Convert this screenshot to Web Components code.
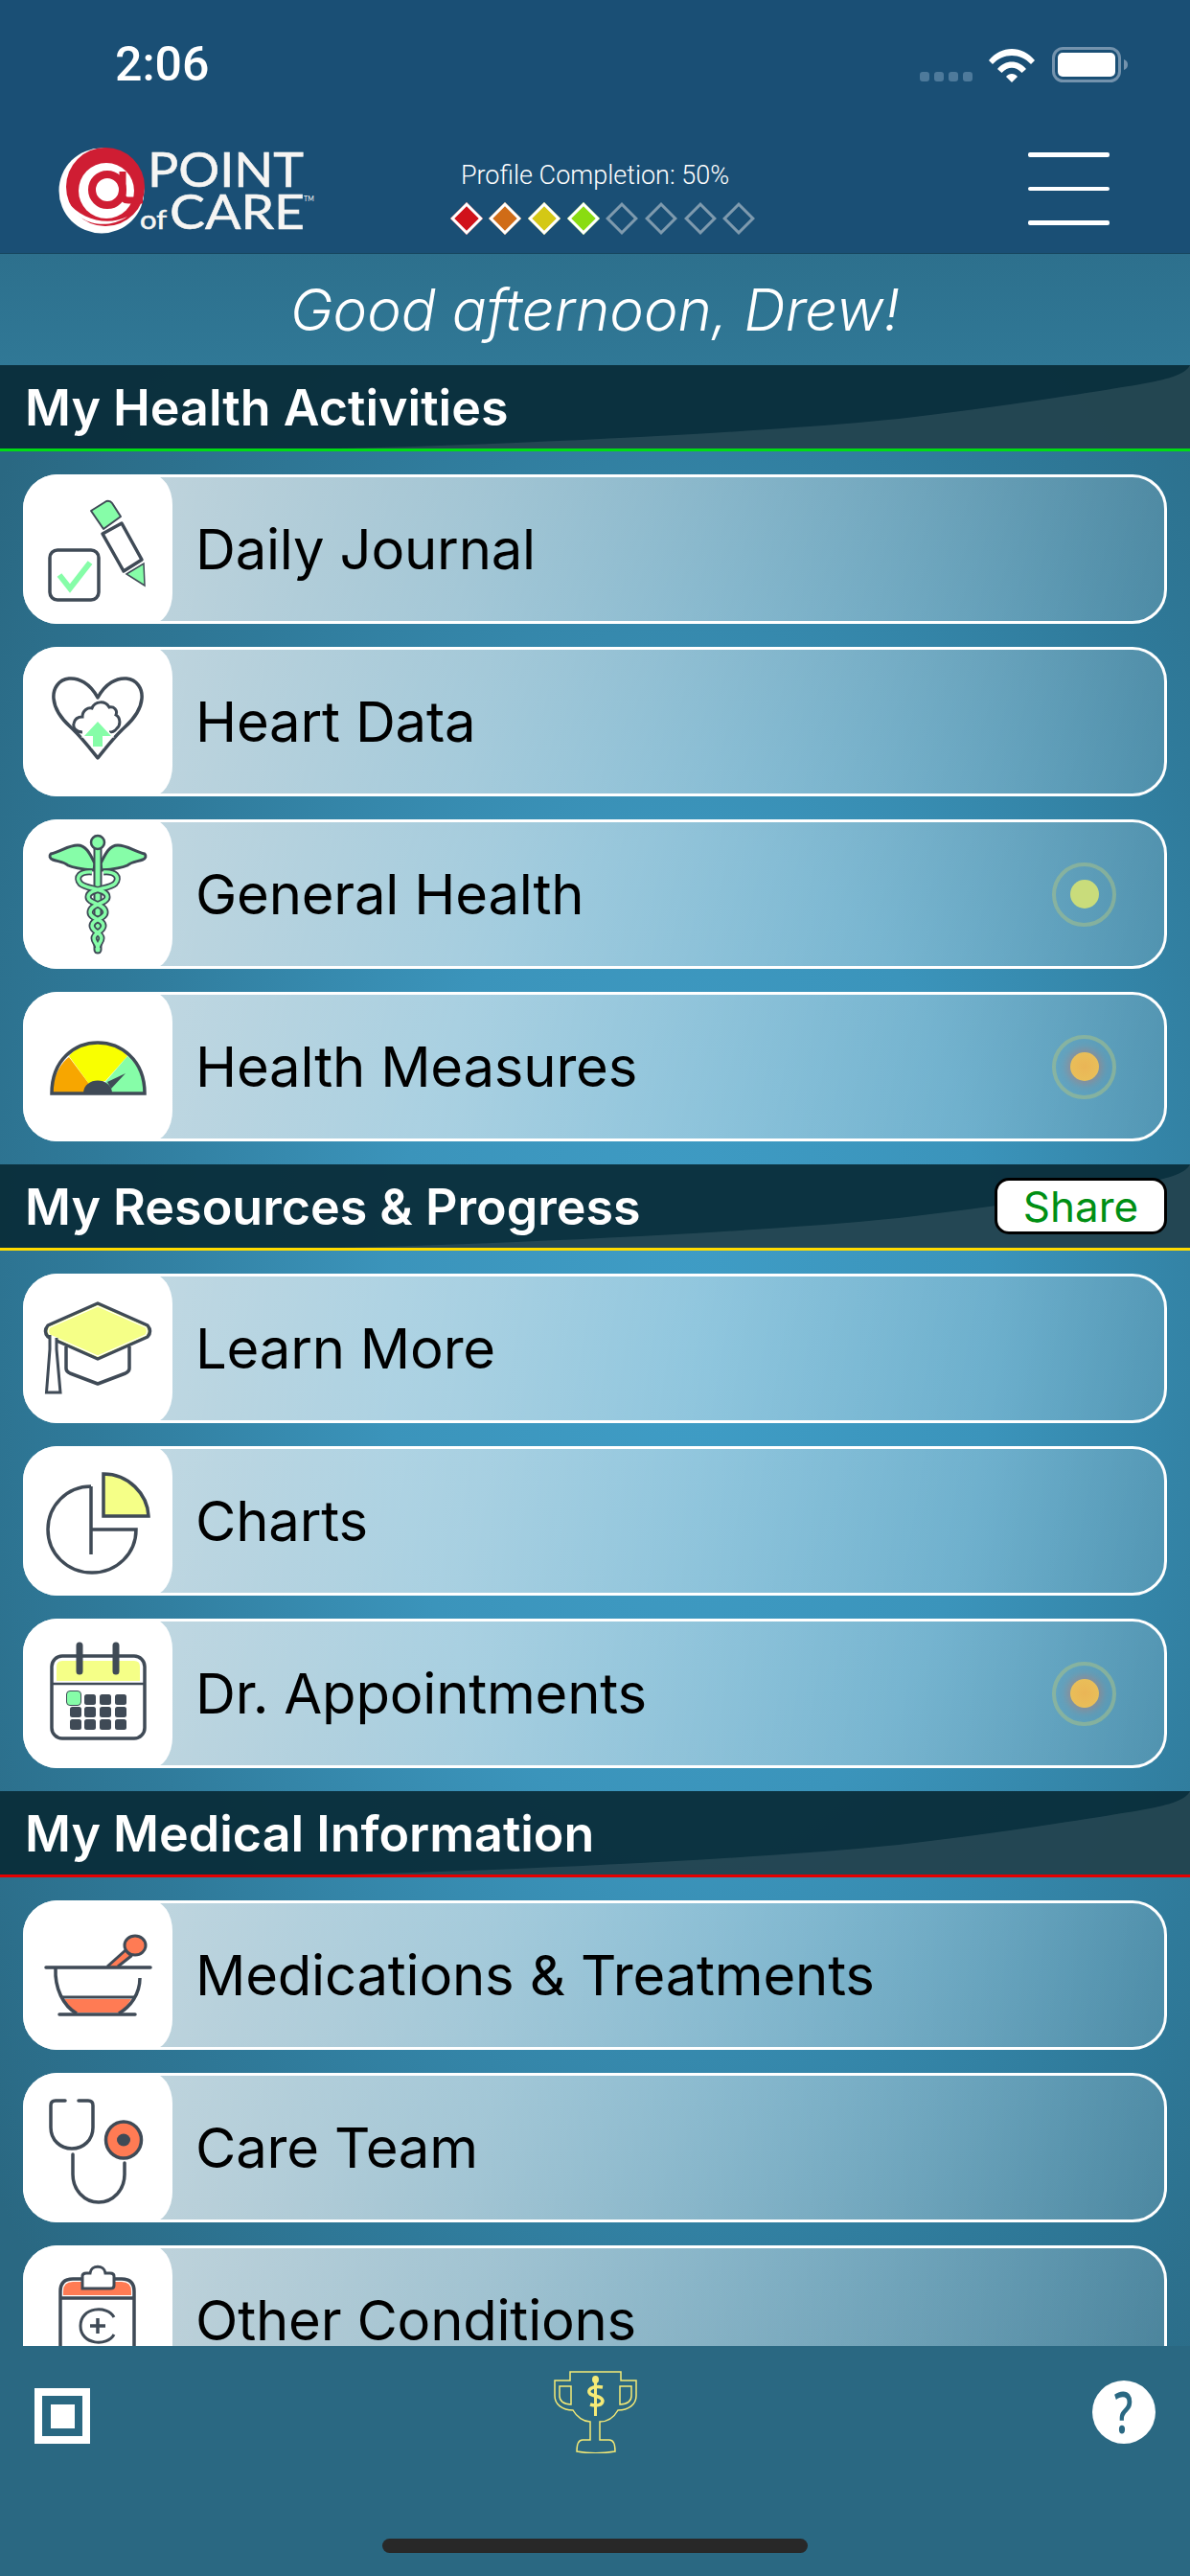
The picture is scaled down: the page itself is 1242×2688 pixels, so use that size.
<!DOCTYPE html>
<html lang="en">
<head>
<meta charset="utf-8">
<title>Point of Care</title>
<style>
  html, body { margin: 0; padding: 0; }
  body { width: 1242px; height: 2688px; overflow: hidden; font-family: "Liberation Sans", Arial, sans-serif; }
</style>
</head>
<body>
<poc-app>
  <poc-status-bar slot="top" time="2:06"></poc-status-bar>
  <poc-top-bar slot="top" completion="Profile Completion: 50%" filled="4"></poc-top-bar>
  <poc-greeting slot="top">Good afternoon, Drew!</poc-greeting>

  <poc-section heading="My Health Activities" line="#00dc14">
    <poc-row icon="journal">Daily Journal</poc-row>
    <poc-row icon="heart">Heart Data</poc-row>
    <poc-row icon="caduceus" dot="green">General Health</poc-row>
    <poc-row icon="gauge" dot="amber">Health Measures</poc-row>
  </poc-section>
  <poc-section heading="My Resources &amp; Progress" line="#ffdc00" share>
    <poc-row icon="cap">Learn More</poc-row>
    <poc-row icon="pie">Charts</poc-row>
    <poc-row icon="calendar" dot="amber">Dr. Appointments</poc-row>
  </poc-section>
  <poc-section heading="My Medical Information" line="#e50000">
    <poc-row icon="mortar">Medications &amp; Treatments</poc-row>
    <poc-row icon="stethoscope">Care Team</poc-row>
    <poc-row icon="clipboard">Other Conditions</poc-row>
  </poc-section>

  <poc-bottom-bar slot="bottom"></poc-bottom-bar>
</poc-app>

<script>
// colours shared by the row icons
const DARK = "#3f4a56";
const GREEN = "#86fda8";
const YELLOW = "#f5ff87";
const CORAL = "#ff7b54";

const SNAKE_A = "M72 55 C60 54 54 60 60 67 C66 73 88 72 88 81 C88 88 70 88 70 97 C70 104 84 104 84 111 C84 117 74 118 74 124 C74 128 78 130 78 134";
const SNAKE_B = "M84 55 C96 54 102 60 96 67 C90 73 68 72 68 81 C68 88 86 88 86 97 C86 104 72 104 72 111 C72 117 82 118 82 124 C82 128 78 130 78 134";

// every icon is drawn in the 156x156 white box
const ICONS = {
  journal: `
    <rect x="28" y="79" width="51" height="52" rx="8" fill="none" stroke="${DARK}" stroke-width="3.5"/>
    <path d="M38 105 L49 119 L70 92" fill="none" stroke="${GREEN}" stroke-width="6"/>
    <path d="M71 38 L87 28 Q91 27 93 30 L102 44 L84 57 Z" fill="${GREEN}" stroke="${DARK}" stroke-width="2" stroke-linejoin="round"/>
    <path d="M83 62 L103 51 L124 89 L105 101 Z" fill="#fff" stroke="${DARK}" stroke-width="3.5" stroke-linejoin="round"/>
    <path d="M108 104 L126 93 L127 116 Z" fill="${GREEN}" stroke="${DARK}" stroke-width="1.5"/>`,
  heart: `
    <path d="M78 53 C70 38 58 32 48 33 C37 34 31 44 32 54 C33 66 40 75 50 84 C60 93 70 106 78 116 C86 106 96 93 106 84 C116 75 123 66 124 54 C125 44 119 34 108 33 C98 32 86 38 78 53 Z" fill="none" stroke="${DARK}" stroke-width="3.5" stroke-linejoin="round"/>
    <path d="M62 89 C55 89 52 84 53 80 C54 75 58 73 62 73 C62 66 68 63 72 64 C75 56 86 56 90 63 C95 62 99 66 97 71 C102 74 102 82 98 85 C96 88 93 89 90 89" fill="none" stroke="${DARK}" stroke-width="3"/>
    <path d="M78 78 L92 93 L83 93 L83 104 L73 104 L73 93 L64 93 Z" fill="${GREEN}" stroke="#fff" stroke-width="3" paint-order="stroke"/>`,
  caduceus: `
    <g stroke="${DARK}" stroke-width="3" stroke-linejoin="round" fill="${GREEN}">
      <path d="M75 46 C70 36 66 27 57 27 C48 27 40 33 29 36 C27 38 28 41 31 42 C36 44 43 44 47 48 C53 51 62 52 74 53 Z"/>
      <path d="M81 46 C86 36 90 27 99 27 C108 27 116 33 127 36 C129 38 128 41 125 42 C120 44 113 44 109 48 C103 51 94 52 82 53 Z"/>
    </g>
    <path d="M78 28 L78 136" stroke="${DARK}" stroke-width="9" stroke-linecap="round"/>
    <path d="M78 28 L78 136" stroke="${GREEN}" stroke-width="5" stroke-linecap="round"/>
    <circle cx="78" cy="24" r="7" fill="${GREEN}" stroke="${DARK}" stroke-width="2.5"/>
    <g fill="none" stroke="${DARK}" stroke-width="7">
      <path d="${SNAKE_A}"/>
      <path d="${SNAKE_B}"/>
    </g>
    <g fill="none" stroke="${GREEN}" stroke-width="3.500">
      <path d="${SNAKE_A}"/>
      <path d="${SNAKE_B}"/>
    </g>`,
  gauge: `
    <path d="M30 106 C31 86 41 73 48 68 L69 96 L63 106 Z" fill="#f7a600"/>
    <path d="M48 67 C60 50 96 50 109 67 L86 93 L69 96 Z" fill="#f9ff00"/>
    <path d="M109 67 C120 75 126 90 127 106 L93 106 L86 94 Z" fill="${GREEN}"/>
    <path d="M30 106 C30 70 55 53 78 53 C101 53 127 70 127 106 Z" fill="none" stroke="${DARK}" stroke-width="3.5"/>
    <path d="M63 106 C63 88 93 88 93 106 Z" fill="${DARK}"/>
    <path d="M88 94 L107 85 L92 101 Z" fill="${DARK}"/>`,
  cap: `
    <path d="M45 76 L45 99 Q45 102 49 104 L78 115 L107 104 Q111 102 111 99 L111 76" fill="none" stroke="${DARK}" stroke-width="3.5" stroke-linejoin="round"/>
    <path d="M78 31 L130 54 Q135 60 130 66 L78 89 L26 66 Q21 60 26 54 Z" fill="${YELLOW}" stroke="${DARK}" stroke-width="3.5" stroke-linejoin="round"/>
    <path d="M78 34 L128 56 Q131 60 128 64 L78 86 L28 64 Q25 60 28 56 Z" fill="none" stroke="#fff" stroke-width="1.2"/>
    <path d="M28 64 L28 79 L24.5 124 L39 124 L35 79 L35 67" fill="#fff" stroke="${DARK}" stroke-width="3"/>`,
  pie: `
    <path d="M84 29 C110 29 130 50 131 73 L84 73 Z" fill="${YELLOW}" stroke="${DARK}" stroke-width="3.5"/>
    <path d="M71 42 C46 42 26 62 26 87 C26 112 46 132 72 132 C98 132 118 112 118 87 L71 87" fill="none" stroke="${DARK}" stroke-width="3.5"/>
    <path d="M71 42 L71 113" fill="none" stroke="${DARK}" stroke-width="3.5"/>`,
  calendar: `
    <rect x="30" y="39" width="97" height="86" rx="11" fill="#fff" stroke="${DARK}" stroke-width="3.5"/>
    <path d="M35 65 L35 50 Q35 44 41 44 L116 44 Q122 44 122 50 L122 65 Z" fill="${YELLOW}"/>
    <path d="M30 68 L127 68" stroke="${DARK}" stroke-width="2.5"/>
    <path d="M59 28 L59 55 M97 28 L97 55" stroke="${DARK}" stroke-width="7" stroke-linecap="round"/>
    <rect x="45.5" y="75.5" width="15" height="15" rx="3.5" fill="${GREEN}" stroke="${DARK}"/>
    <g fill="${DARK}">
      <rect x="64" y="79" width="12" height="11" rx="2.5"/><rect x="80" y="79" width="12" height="11" rx="2.5"/><rect x="96" y="79" width="12" height="11" rx="2.5"/>
      <rect x="49" y="92" width="12" height="11" rx="2.5"/><rect x="64" y="92" width="12" height="11" rx="2.5"/><rect x="80" y="92" width="12" height="11" rx="2.5"/><rect x="96" y="92" width="12" height="11" rx="2.5"/>
      <rect x="49" y="105" width="12" height="11" rx="2.5"/><rect x="64" y="105" width="12" height="11" rx="2.5"/><rect x="80" y="105" width="12" height="11" rx="2.5"/><rect x="96" y="105" width="12" height="11" rx="2.5"/>
    </g>`,
  mortar: `
    <path d="M43 103 L113 103 C110 108 106 113 100 117 L56 117 C50 113 46 108 43 103 Z" fill="${CORAL}"/>
    <path d="M40 101 L116 101" stroke="${DARK}" stroke-width="3"/>
    <path d="M34 71 C33 92 42 110 56 118 M100 118 C112 111 122 98 122 81" fill="none" stroke="${DARK}" stroke-width="3.5"/>
    <path d="M38 119 L117 119" stroke="${DARK}" stroke-width="3.5" stroke-linecap="round"/>
    <path d="M88 69 L107 52 L113 58 L99 69" fill="${CORAL}" stroke="${DARK}" stroke-width="3" stroke-linejoin="round"/>
    <ellipse cx="117" cy="47" rx="11" ry="10" fill="${CORAL}" stroke="${DARK}" stroke-width="3"/>
    <path d="M24 70 L133 70" stroke="${DARK}" stroke-width="3.5" stroke-linecap="round"/>`,
  stethoscope: `
    <path d="M44 29 L34 29 Q29 29 29 34 L29 57 C29 70 39 79 51 79 C63 79 73 70 73 57 L73 34 Q73 29 68 29 L58 29" fill="none" stroke="${DARK}" stroke-width="3.5" stroke-linecap="round"/>
    <path d="M52 85 L52 106 C52 122 64 135 79 135 C94 135 106 122 106 106 L106 94" fill="none" stroke="${DARK}" stroke-width="3.5" stroke-linecap="round"/>
    <ellipse cx="105" cy="70" rx="18" ry="18.5" fill="${CORAL}" stroke="#fff" stroke-width="1"/>
    <ellipse cx="105" cy="70" rx="18.5" ry="19" fill="none" stroke="${DARK}" stroke-width="3.5"/>
    <ellipse cx="105" cy="70" rx="7" ry="6.5" fill="${DARK}"/>`,
  clipboard: `
    <path d="M39 160 L39 48 Q39 35 52 35 L103 35 Q116 35 116 48 L116 160" fill="#fff" stroke="${DARK}" stroke-width="3.5"/>
    <path d="M42 52 L42 48 Q42 38 52 38 L103 38 Q113 38 113 48 L113 52 Z" fill="${CORAL}"/>
    <path d="M39 55 L116 55" stroke="${DARK}" stroke-width="3.5"/>
    <path d="M62 45 L62 32 Q62 29 66 29 L70 29 C71 20 85 20 86 29 L91 29 Q95 29 95 32 L95 42 Q95 45 91 45 Z" fill="#fff" stroke="${DARK}" stroke-width="3"/>
    <path d="M95 93 C88 106 60 104 60 84 C60 64 88 62 95 75" fill="none" stroke="${DARK}" stroke-width="3"/>
    <path d="M78 76 L78 92 M70 84 L86 84" stroke="${DARK}" stroke-width="3.5"/>`
};

class PocApp extends HTMLElement {
  constructor() {
    super();
    this.attachShadow({ mode: "open" }).innerHTML = `
      <style>
        :host {
          display: flex; flex-direction: column;
          width: 1242px; height: 2688px;
          background: radial-gradient(ellipse 900px 1500px at 58% 52%, #3f9dc6 0%, #3b94bb 35%, #2f7a9a 70%, #2a6882 100%);
        }
        .top { display: block; flex: none; }
        .scroll { flex: 1; min-height: 0; overflow: hidden; display: flex; flex-direction: column; }
        .bottom { display: block; flex: none; }
      </style>
      <div class="top"><slot name="top"></slot></div>
      <div class="scroll"><slot></slot></div>
      <div class="bottom"><slot name="bottom"></slot></div>`;
  }
}

class PocStatusBar extends HTMLElement {
  constructor() {
    super();
    const time = this.getAttribute("time");
    this.attachShadow({ mode: "open" }).innerHTML = `
      <style>
        :host {
          display: flex; align-items: flex-start; justify-content: space-between;
          box-sizing: border-box; height: 132px; padding: 49px 65px 0 120px;
          background: #1a4f75; color: #fff;
        }
        .time { font: 500 50px/37px Roboto, sans-serif; }
        .right { display: flex; align-items: flex-end; height: 37px; }
        .dots { display: flex; gap: 5px; margin: 0 17px 1px 0; }
        .dots i { width: 10px; height: 10px; border-radius: 3px; background: #4e7a9b; }
        svg { display: block; }
        .battery { margin-left: 18px; }
      </style>
      <div class="time">${time}</div>
      <div class="right">
        <div class="dots"><i></i><i></i><i></i><i></i></div>
        <svg width="48" height="36" viewBox="0 0 48 36">
          <path d="M0 13 C13 -3 35 -3 48 13 L44 17 C33 5 15 5 4 17 Z" fill="#fff"/>
          <path d="M9 22 C17 12 31 12 39 22 L34.500 26 C28 19 20 19 13.500 26 Z" fill="#fff"/>
          <path d="M18 30 C21 26 27 26 30 30 L24 36 Z" fill="#fff"/>
        </svg>
        <svg class="battery" width="79" height="37" viewBox="0 0 79 37">
          <rect x="1.500" y="1.500" width="69" height="34" rx="10" fill="none" stroke="#7493ad" stroke-width="3"/>
          <rect x="6" y="6" width="60" height="25" rx="5" fill="#fff"/>
          <path d="M75 13 C78 14 79 16 79 18.500 C79 21 78 23 75 24 Z" fill="#7493ad"/>
        </svg>
      </div>`;
  }
}

class PocLogo extends HTMLElement {
  constructor() {
    super();
    this.attachShadow({ mode: "open" }).innerHTML = `
      <style>
        :host { display: block; width: 265px; height: 90px; }
        svg { display: block; overflow: visible; }
        text { font-family: Lato, "Open Sans", sans-serif; fill: #f6f5f3; stroke: #f6f5f3; stroke-width: .6px; }
        .tm { stroke: none; }
      </style>
      <svg width="265" height="90" viewBox="0 0 265 90">
        <circle cx="45" cy="45" r="44.500" fill="#fff"/>
        <circle cx="49" cy="41" r="41" fill="#cf1d33"/>
        <path d="M9 56 C18 78 48 88 72 72 C52 82 24 76 9 56 Z" fill="#fff"/>
        <circle cx="50" cy="45" r="29" fill="#fff"/>
        <circle cx="51" cy="44" r="16" fill="none" stroke="#cf1d33" stroke-width="8"/>
        <path d="M67 25 L67 50 Q67 55 73 55 L88 55" fill="none" stroke="#cf1d33" stroke-width="7"/>
        <text x="93" y="41" font-size="51" textLength="163" lengthAdjust="spacingAndGlyphs">POINT</text>
        <text x="116" y="85" font-size="50" textLength="141" lengthAdjust="spacingAndGlyphs">CARE</text>
        <text x="85" y="85" font-size="27" textLength="28" lengthAdjust="spacingAndGlyphs">of</text>
        <text class="tm" x="256" y="56" font-size="7">TM</text>
      </svg>`;
  }
}

class PocTopBar extends HTMLElement {
  constructor() {
    super();
    const filled = Number(this.getAttribute("filled"));
    const colors = ["#d0121a", "#d06c17", "#d4c815", "#8adc11"];
    let diamonds = "";
    for (let i = 0; i < 8; i++) {
      diamonds += i < filled ? `<i style="background:${colors[i]};border-color:#fff"></i>` : "<i></i>";
    }
    this.attachShadow({ mode: "open" }).innerHTML = `
      <style>
        :host {
          display: grid; grid-template-columns: 1fr auto 1fr;
          box-sizing: border-box; height: 133px; padding: 22px 61px 0;
          background: #1a4f75; border-bottom: 1px solid #17465f; color: #fff;
        }
        .profile { padding-top: 12px; display: flex; flex-direction: column; align-items: center; gap: 11px; }
        .label { font: 300 27px/34px Roboto, sans-serif; white-space: nowrap; }
        .diamonds { display: flex; gap: 6.700px; margin-left: 16px; }
        .diamonds i {
          display: block; box-sizing: border-box; width: 24px; height: 24px; margin: 5px;
          border: 3px solid #7e9aae; transform: rotate(45deg);
        }
        .menu { justify-self: end; margin: 5px 23px 0 0; width: 85px; display: flex; flex-direction: column; gap: 31px; }
        .menu i { display: block; height: 4.500px; border-radius: 2px; background: #fff; }
      </style>
      <poc-logo></poc-logo>
      <div class="profile">
        <div class="label">${this.getAttribute("completion")}</div>
        <div class="diamonds">${diamonds}</div>
      </div>
      <div class="menu"><i></i><i></i><i></i></div>`;
  }
}

class PocGreeting extends HTMLElement {
  constructor() {
    super();
    this.attachShadow({ mode: "open" }).innerHTML = `
      <style>
        :host {
          display: flex; align-items: center; justify-content: center;
          height: 116px; color: #fff;
          background: linear-gradient(180deg, #2d708d, #307896);
          font: italic 300 60px/1 Inter, sans-serif;
        }
      </style>
      <slot></slot>`;
  }
}

class PocSection extends HTMLElement {
  constructor() {
    super();
    const share = this.hasAttribute("share") ? `<button>Share</button>` : "";
    this.attachShadow({ mode: "open" }).innerHTML = `
      <style>
        :host { display: block; flex: none; }
        header {
          position: relative; display: flex; align-items: center; justify-content: space-between;
          box-sizing: border-box; height: 90px; padding: 0 24px 0 26px;
          background: rgba(10, 45, 58, .95);
          border-bottom: 3px solid ${this.getAttribute("line")};
        }
        svg { position: absolute; left: 0; top: 0; }
        h2 { position: relative; margin: 0; padding-top: 3px; color: #fff; font: 600 52px/1 Inter, sans-serif; }
        button {
          position: relative; box-sizing: border-box; width: 180px; height: 59px; padding: 0;
          background: #fff; border: 3px solid #000; border-radius: 15px;
          color: #008f14; font: 44px/1 Inter, sans-serif;
        }
        .rows { display: flex; flex-direction: column; gap: 24px; padding: 24px; }
      </style>
      <header>
        <svg width="1242" height="87" viewBox="0 0 1242 87">
          <path d="M350 87 C500 84 780 72 938 56 C1040 44 1130 30 1190 20 C1225 14 1238 8 1242 0 L1242 87 Z" fill="rgba(255,255,255,.1)"/>
        </svg>
        <h2>${this.getAttribute("heading")}</h2>
        ${share}
      </header>
      <div class="rows"><slot></slot></div>`;
  }
}

class PocRow extends HTMLElement {
  constructor() {
    super();
    const dot = this.getAttribute("dot");
    this.attachShadow({ mode: "open" }).innerHTML = `
      <style>
        :host {
          display: flex; align-items: center;
          box-sizing: border-box; height: 156px;
          border: 3px solid #fff; border-radius: 36px;
          background: linear-gradient(100deg, rgba(255,255,255,.75) 0%, rgba(255,255,255,.55) 40%, rgba(255,255,255,.15) 100%);
          color: #000; font: 58px/1 Inter, sans-serif; letter-spacing: -.2px;
        }
        .icon {
          flex: none; width: 156px; height: 156px; margin: -3px 24px -3px -3px;
          background: #fff; border-radius: 36px 22px 22px 36px / 36px 32px 32px 36px;
        }
        .icon svg { display: block; }
        .label { flex: 1; white-space: nowrap; }
        .dot { flex: none; position: relative; width: 67px; height: 67px; margin-right: 50px; box-sizing: border-box; border: 4px solid rgba(160,190,140,.6); border-radius: 50%; display: flex; align-items: center; justify-content: center; }
        .dot i { width: 30px; height: 30px; border-radius: 50%; }
        .green i { background: #c9dc7b; }
        .amber i { background: radial-gradient(circle, #eab556 0%, #e9c25a 100%); box-shadow: 0 0 10px 3px rgba(214,110,90,.45); }
      </style>
      <div class="icon"><svg width="156" height="156" viewBox="0 0 156 156">${ICONS[this.getAttribute("icon")]}</svg></div>
      <div class="label"><slot></slot></div>
      ${dot ? `<div class="dot ${dot}"><i></i></div>` : ""}`;
  }
}

class PocBottomBar extends HTMLElement {
  constructor() {
    super();
    this.attachShadow({ mode: "open" }).innerHTML = `
      <style>
        :host {
          display: block; box-sizing: border-box; height: 240px; padding-top: 26px;
          background: #2a6882;
        }
        .row { display: grid; grid-template-columns: 1fr auto 1fr; height: 86px; padding: 0 36px; }
        .stop { box-sizing: border-box; width: 58px; height: 58px; margin-top: 18px; border: 8px solid #fff; padding: 8.500px; }
        .stop i { display: block; width: 25px; height: 25px; background: #fff; }
        svg { display: block; }
        .help {
          justify-self: end; width: 66px; height: 66px; margin-top: 10px; border-radius: 50%;
          background: #fff; color: #2a6882; text-align: center;
          font: 600 60px/64px "Open Sans", sans-serif;
        }
        .help span { display: inline-block; transform: scaleX(.72); }
        .home { width: 444px; height: 15px; margin: 89px auto 0; border-radius: 8px; background: #282828; }
      </style>
      <div class="row">
        <div class="stop"><i></i></div>
        <svg width="87" height="86" viewBox="0 0 87 86" fill="none" stroke="#f5ea76" stroke-width="1.500">
          <path d="M17 1 L70 1 L70 10 L86 10 L86 26 C86 35 78 41 67 41 C63 48 56 53 48 53 L48 72 L58 72 C63 72 64 77 64 84 C52 86 35 86 24 84 C24 77 25 72 30 72 L38 72 L38 53 C31 53 24 48 20 41 C9 41 1 35 1 26 L1 10 L17 10 Z"/>
          <path d="M6 16 L18 16 L18 35 C10 35 6 31 6 26 Z"/>
          <path d="M81 16 L69 16 L69 35 C77 35 81 31 81 26 Z"/>
          <path d="M43.500 6 L43.500 47" stroke-width="3"/>
          <ellipse cx="43.500" cy="9" rx="3.500" ry="4" fill="#f5ea76" stroke="none"/>
          <path d="M51 17 C40 15 34 20 38 24 C42 27 50 26 51 31 C51 36 44 37 38 35" stroke-width="3.500"/>
        </svg>
        <div class="help"><span>?</span></div>
      </div>
      <div class="home"></div>`;
  }
}

customElements.define("poc-logo", PocLogo);
customElements.define("poc-status-bar", PocStatusBar);
customElements.define("poc-top-bar", PocTopBar);
customElements.define("poc-greeting", PocGreeting);
customElements.define("poc-section", PocSection);
customElements.define("poc-row", PocRow);
customElements.define("poc-bottom-bar", PocBottomBar);
customElements.define("poc-app", PocApp);
</script>
</body>
</html>
